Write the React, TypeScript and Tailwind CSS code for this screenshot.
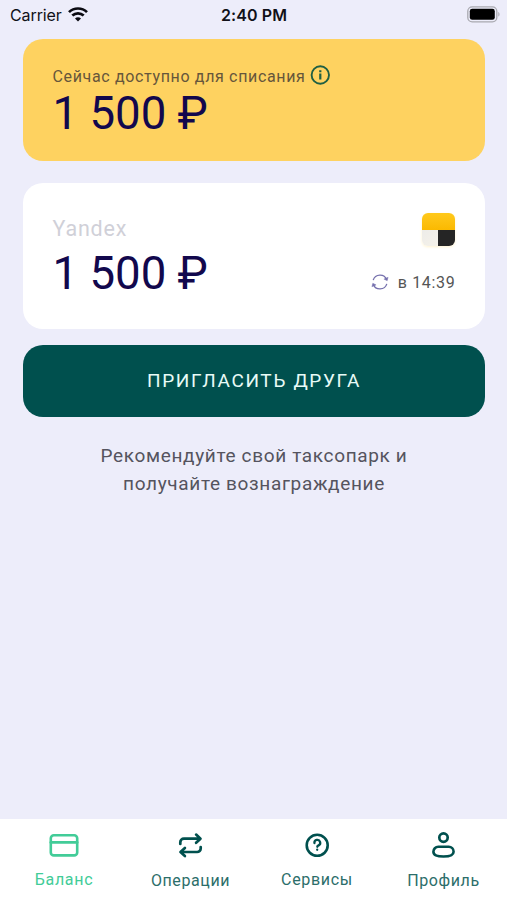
import type { ReactNode } from "react";

function WifiIcon() {
  return (
    <svg width="20" height="15" viewBox="0 0 20 15" fill="none" stroke="#0b0b12" strokeWidth="2.7">
      <path d="M1 5.1C6 .3 14 .3 19 5.1" />
      <path d="M4.3 8.6c3.3-3.1 8.1-3.1 11.4 0" />
      <path d="M10 14.6l-3-3.1c1.7-1.6 4.3-1.6 6 0z" fill="#0b0b12" stroke="none" />
    </svg>
  );
}

function BatteryIcon() {
  return (
    <svg width="33" height="17" viewBox="0 0 33 17" fill="none">
      <rect x=".8" y=".8" width="29" height="15" rx="4.4" stroke="#a9a9b0" strokeWidth="1.3" />
      <rect x="2.8" y="2.8" width="25" height="11" rx="2.4" fill="#000" />
      <path d="M31.3 6c1.6.6 1.6 4 0 4.6z" fill="#a9a9b0" />
    </svg>
  );
}

function InfoIcon() {
  return (
    <svg width="20" height="20" viewBox="0 0 20 20" fill="none" stroke="#1f5f43" strokeWidth="1.9">
      <circle cx="10.3" cy="10" r="8.7" />
      <path d="M10.3 8.6v6M10.3 5.2v2" strokeWidth="2.2" />
    </svg>
  );
}

function RefreshIcon() {
  return (
    <svg width="18" height="18" viewBox="0 0 18 18" fill="none" stroke="#7570ad" strokeWidth="1.3">
      <path d="M2.2 7.1a7.1 7.1 0 0 1 13.5-.3" />
      <path d="M15.8 10.9a7.1 7.1 0 0 1-13.5.3" />
      <path d="M12.9 6.1l3.3 1.7.9-3.5z" fill="#7570ad" strokeWidth=".4" />
      <path d="M5.1 11.9l-3.3-1.7-.9 3.5z" fill="#7570ad" strokeWidth=".4" />
    </svg>
  );
}

function PartnerLogo() {
  return (
    <div className="flex h-[33px] w-[33px] flex-wrap overflow-hidden rounded-[6px] shadow-[0_1px_3px_#fff3cf]">
      <div className="h-[17px] w-full bg-linear-to-b from-[#ffc91a] to-[#fbb900]" />
      <div className="h-[16px] w-[16px] bg-linear-to-br from-[#edece9] to-[#f5f2e9]" />
      <div className="h-[16px] w-[17px] bg-[#252525]" />
    </div>
  );
}

function Amount({ className }: { className: string }) {
  return (
    <div className={`text-[45.6px] leading-[54px] whitespace-nowrap text-[#12084d] ${className}`}>
      1 500 ₽
    </div>
  );
}

function Tab({ label, className, labelClass, children }: { label: string; className: string; labelClass: string; children: ReactNode }) {
  return (
    <button className={`flex w-[126.5px] flex-col items-center pt-[11px] pl-[1.5px] ${className}`}>
      <svg width="30" height="30" viewBox="0 0 30 30" fill="none" stroke="currentColor" strokeLinecap="round" strokeLinejoin="round">
        {children}
      </svg>
      <span className={`text-[16px] leading-5 ${labelClass}`}>{label}</span>
    </button>
  );
}

export default function App() {
  return (
    <div className="flex h-[900px] w-[507px] flex-col bg-[#ededfa] font-['Roboto','Noto_Sans',sans-serif]">
      <header className="grid h-[39px] grid-cols-3 items-start font-['Inter',sans-serif] text-[#111118]">
        <div className="flex items-start gap-[6px] pt-[5px] pl-[10px]">
          <span className="text-[16px] leading-5 tracking-[-0.1px]">Carrier</span>
          <div className="pt-[2px]"><WifiIcon /></div>
        </div>
        <span className="pt-[5px] pl-[1px] text-center text-[16px] leading-5 font-semibold tracking-[0.1px]">2:40 PM</span>
        <div className="flex justify-end pt-[6px] pr-[7px]"><BatteryIcon /></div>
      </header>

      <main className="flex flex-1 flex-col px-[22.5px]">
        <section className="h-[122px] rounded-[20px] bg-[#fed260] px-[30px] pt-[26px]">
          <div className="flex h-[22px] items-start gap-[5px]">
            <span className="pt-[2px] text-[16px] leading-5 tracking-[0.65px] text-[#66563b]">Сейчас доступно для списания</span>
            <InfoIcon />
          </div>
          <Amount className="" />
        </section>

        <section className="mt-[22px] flex h-[146px] justify-between rounded-[20px] bg-white pr-[30px] pl-[30px]">
          <div className="pt-[33px]">
            <div className="text-[21.5px] leading-[26px] tracking-[0.8px] text-[#d0d0d8]">Yandex</div>
            <Amount className="mt-[5px]" />
          </div>
          <div className="flex flex-col items-end pt-[29.5px]">
            <PartnerLogo />
            <div className="mt-[27.5px] -mr-[1px] flex items-center gap-[9px]">
              <div className="-mt-[3px]"><RefreshIcon /></div>
              <span className="text-[16px] leading-5 tracking-[0.7px] text-[#555555]">в 14:39</span>
            </div>
          </div>
        </section>

        <button className="mt-4 h-[72px] rounded-[20px] bg-[#00504e] pt-[1px] pl-[1px] text-[19px] tracking-[1.65px] text-[#e8fbf7]">
          ПРИГЛАСИТЬ ДРУГА
        </button>

        <p className="mt-[25px] pl-[1px] text-center text-[19px] leading-[28px] tracking-[0.65px] text-[#55545e]">
          Рекомендуйте свой таксопарк и<br />получайте вознаграждение
        </p>
      </main>

      <nav className="flex h-[81px] bg-white">
        <Tab label="Баланс" className="text-[#42cc98]" labelClass="mt-[10px] tracking-[0.7px]">
          <rect x="1.8" y="5.2" width="26.4" height="20.2" rx="3" strokeWidth="2.6" />
          <path d="M1.8 12.4h26.4" strokeWidth="2.6" />
        </Tab>
        <Tab label="Операции" className="text-[#00504e]" labelClass="mt-[11px] tracking-[0.6px] text-[#2c6e6a]">
          <path d="M4.3 13.9v-1.6a3.6 3.6 0 0 1 3.6-3.6h16M20.1 4.6l4.4 4.1-4.4 4.1M24.7 17v1.4a3.6 3.6 0 0 1-3.6 3.6H5.1M8.9 17.9L4.5 22l4.4 4.1" strokeWidth="2.7" />
        </Tab>
        <Tab label="Сервисы" className="text-[#00504e]" labelClass="mt-[10px] tracking-[0.7px] text-[#2c6e6a]">
          <circle cx="15.2" cy="15.3" r="10.5" strokeWidth="2.6" />
          <path d="M12.4 13a2.9 2.9 0 1 1 4.2 2.4c-1 .5-1.3.8-1.3 1.4M15.2 19.7v.1" strokeWidth="2.3" />
        </Tab>
        <Tab label="Профиль" className="text-[#00504e]" labelClass="mt-[11px] tracking-[0.6px] text-[#2c6e6a]">
          <circle cx="14.5" cy="7.6" r="4.2" strokeWidth="2.7" />
          <path d="M9.3 16.8h10.4a4.9 4.9 0 0 1 4.9 4.9c0 3.2-3.2 4.8-10.1 4.8s-10.1-1.6-10.1-4.8a4.9 4.9 0 0 1 4.9-4.9z" strokeWidth="2.6" />
        </Tab>
      </nav>
    </div>
  );
}
